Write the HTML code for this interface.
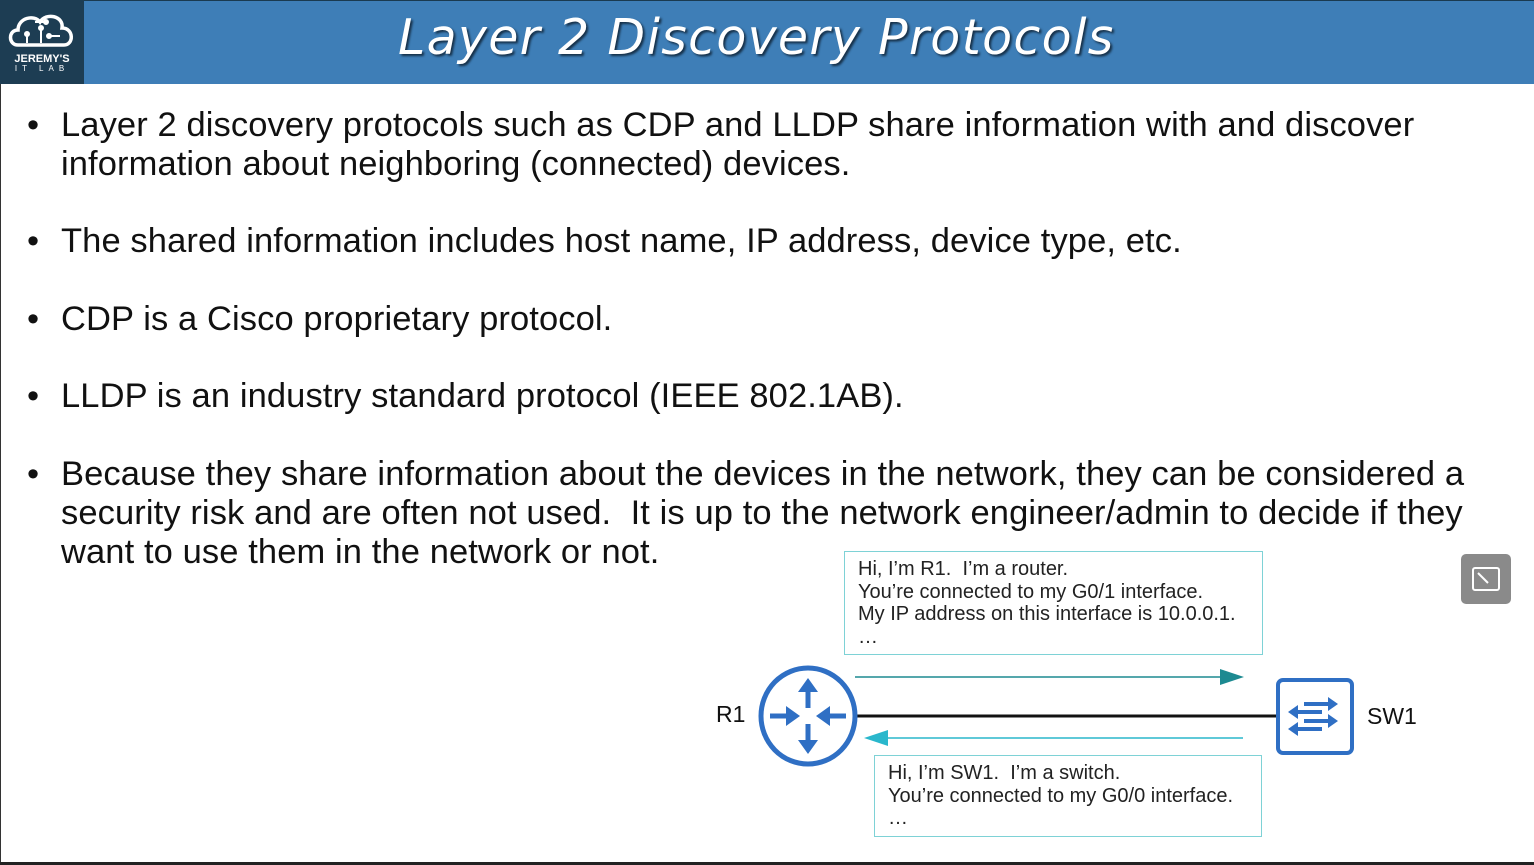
<!DOCTYPE html>
<html><head><style>
body{margin:0;width:1534px;height:865px;background:#fff;position:relative;overflow:hidden;font-family:"Liberation Sans",sans-serif;}
.hdr{position:absolute;left:0;top:0;width:1534px;height:84px;background:#3e7eb7;border-top:1px solid #1a3a50;box-sizing:border-box}
.logo{position:absolute;left:0;top:0;width:84px;height:84px;background:#1d3d53}
.title{position:absolute;left:398px;top:9px;font-family:"Comic Sans MS","DejaVu Sans",sans-serif;font-style:italic;font-size:49px;color:#fff;letter-spacing:1.3px;text-shadow:2px 2px 2px #163048;white-space:nowrap}
.b{position:absolute;left:61px;font-size:34.5px;color:#111;line-height:39px;white-space:nowrap;letter-spacing:0.1px}
.b:before{content:"•";position:absolute;left:-34px;}
.box{position:absolute;border:1.5px solid #7ed2d6;font-size:20px;color:#222;line-height:22.5px;padding:6px 0 0 13px;box-sizing:border-box;white-space:nowrap}
.lab{position:absolute;font-size:23px;color:#111}
.btm{position:absolute;left:0;top:862px;width:1534px;height:3px;background:#222}
.side{position:absolute;left:0;top:84px;width:1px;height:780px;background:#333}
</style></head><body>
<div class="hdr"></div>
<div class="logo">
<svg width="84" height="84" viewBox="0 0 84 84"><path d="M18 45 C8 45 8 30 18 30 C18 18 34 14 40 22 C46 12 64 16 62 28 C74 28 74 45 64 45 Z" fill="none" stroke="#fff" stroke-width="3.5"/><g stroke="#fff" stroke-width="2" fill="#fff"><line x1="27" y1="43" x2="27" y2="35"/><circle cx="27" cy="34" r="2"/><line x1="41" y1="43" x2="41" y2="30"/><circle cx="41" cy="28" r="2"/><line x1="49" y1="36" x2="60" y2="36"/><circle cx="49" cy="36" r="2"/><line x1="35" y1="22" x2="46" y2="22"/><circle cx="46" cy="22" r="2"/></g>
<text x="42" y="62" fill="#fff" font-family="Liberation Sans" font-weight="bold" font-size="11" text-anchor="middle">JEREMY'S</text>
<text x="42" y="71" fill="#fff" font-family="Liberation Sans" font-size="8" text-anchor="middle" letter-spacing="5">IT LAB</text></svg>
</div>
<div class="title">Layer 2 Discovery Protocols</div>
<div class="side"></div>
<div class="b" style="top:106px">Layer 2 discovery protocols such as CDP and LLDP share information with and discover<br>information about neighboring (connected) devices.</div>
<div class="b" style="top:222px">The shared information includes host name, IP address, device type, etc.</div>
<div class="b" style="top:300px">CDP is a Cisco proprietary protocol.</div>
<div class="b" style="top:377px">LLDP is an industry standard protocol (IEEE 802.1AB).</div>
<div class="b" style="top:455px">Because they share information about the devices in the network, they can be considered a<br>security risk and are often not used.&nbsp; It is up to the network engineer/admin to decide if they<br>want to use them in the network or not.</div>
<div class="box" style="left:844px;top:551px;width:419px;height:104px">Hi, I’m R1.&nbsp; I’m a router.<br>You’re connected to my G0/1 interface.<br>My IP address on this interface is 10.0.0.1.<br>…</div>
<div class="box" style="left:874px;top:755px;width:388px;height:82px">Hi, I’m SW1.&nbsp; I’m a switch.<br>You’re connected to my G0/0 interface.<br>…</div>
<div class="lab" style="left:716px;top:701px">R1</div>
<div class="lab" style="left:1367px;top:703px">SW1</div>
<svg style="position:absolute;left:0;top:0" width="1534" height="865">
<line x1="855" y1="677" x2="1222" y2="677" stroke="#1d8a91" stroke-width="1.5"/>
<polygon points="1220,669 1244,677 1220,685" fill="#1d8a91"/>
<line x1="886" y1="738" x2="1243" y2="738" stroke="#2ab7cc" stroke-width="1.5"/>
<polygon points="888,730 864,738 888,746" fill="#2ab7cc"/>
<line x1="856" y1="716" x2="1278" y2="716" stroke="#111" stroke-width="3"/>
<ellipse cx="808" cy="716" rx="47" ry="48" fill="#fff" stroke="#2f6fc4" stroke-width="5"/>
<g fill="#2f6fc4" stroke="#2f6fc4" stroke-width="5">
<line x1="808" y1="708" x2="808" y2="688"/><polygon points="798,692 808,678 818,692" stroke="none"/>
<line x1="808" y1="724" x2="808" y2="744"/><polygon points="798,740 808,754 818,740" stroke="none"/>
<line x1="770" y1="716" x2="788" y2="716"/><polygon points="786,706 800,716 786,726" stroke="none"/>
<line x1="846" y1="716" x2="828" y2="716"/><polygon points="830,706 816,716 830,726" stroke="none"/>
</g>
<rect x="1278" y="680" width="74" height="73" rx="5" fill="#fff" stroke="#2f6fc4" stroke-width="4"/>
<g fill="#2f6fc4" stroke="#2f6fc4" stroke-width="4">
<line x1="1304" y1="704" x2="1330" y2="704"/><polygon points="1328,697 1338,704 1328,711" stroke="none"/>
<line x1="1322" y1="712" x2="1296" y2="712"/><polygon points="1298,705 1288,712 1298,719" stroke="none"/>
<line x1="1304" y1="721" x2="1330" y2="721"/><polygon points="1328,714 1338,721 1328,728" stroke="none"/>
<line x1="1322" y1="729" x2="1296" y2="729"/><polygon points="1298,722 1288,729 1298,736" stroke="none"/>
</g>
<rect x="1461" y="554" width="50" height="50" rx="5" fill="#8a8a8a"/>
<rect x="1473" y="568" width="26" height="22" rx="2" fill="none" stroke="#fff" stroke-width="2"/>
<line x1="1478" y1="573" x2="1488" y2="583" stroke="#fff" stroke-width="2"/>
</svg>
<div class="btm"></div>
</body></html>
